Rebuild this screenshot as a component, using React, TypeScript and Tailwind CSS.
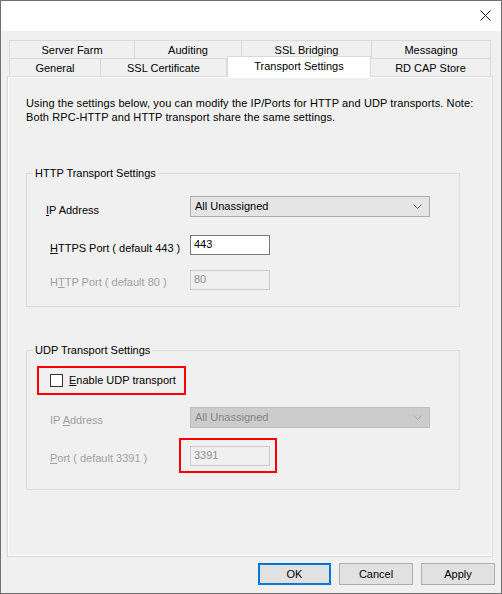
import React from "react";

const tabRow1 = [
  { label: "Server Farm", w: "w-[126px]" },
  { label: "Auditing", w: "w-[107px]" },
  { label: "SSL Bridging", w: "w-[130px]" },
  { label: "Messaging", w: "w-[119px]" },
];

const tabRow2 = [
  { label: "General", w: "w-[92px]", active: false },
  { label: "SSL Certificate", w: "w-[126px]", active: false },
  { label: "Transport Settings", w: "w-[144px]", active: true },
  { label: "RD CAP Store", w: "w-[120px]", active: false },
];

function Chevron({ color }: { color: string }) {
  return (
    <svg width="9" height="5" viewBox="0 0 9 5" className="shrink-0">
      <polyline points="0.5,0.5 4.5,4.5 8.5,0.5" fill="none" stroke={color} strokeWidth="1" />
    </svg>
  );
}

function Select({ disabled }: { disabled?: boolean }) {
  return (
    <div
      className={
        disabled
          ? "w-[240px] h-[21px] flex items-center justify-between pl-[4px] pr-[7px] border border-[#bfbfbf] bg-[#cccccc] text-[#838383]"
          : "w-[240px] h-[21px] flex items-center justify-between pl-[4px] pr-[7px] border border-[#adadad] bg-[#e5e5e5] text-black"
      }
    >
      <span className="-mt-[2px]">All Unassigned</span>
      <Chevron color={disabled ? "#a6a6a6" : "#606060"} />
    </div>
  );
}

function Field({ value, disabled }: { value: string; disabled?: boolean }) {
  return (
    <div
      className={
        disabled
          ? "w-[80px] h-[20px] pl-[3px] pt-[1px] leading-[14px] border border-[#cccccc] bg-[#f0f0f0] text-[#8d8d8d]"
          : "w-[80px] h-[20px] pl-[3px] pt-[1px] leading-[14px] border border-[#7a7a7a] bg-white text-black"
      }
    >
      {value}
    </div>
  );
}

function GroupBox({
  title,
  className,
  children,
}: {
  title: string;
  className: string;
  children: React.ReactNode;
}) {
  return (
    <fieldset className={"ml-[17px] w-[434px] border border-[#dcdcdc] " + className}>
      <legend className="ml-[6px] px-[2px] leading-[14px] text-black">{title}</legend>
      {children}
    </fieldset>
  );
}

export default function App() {
  return (
    <div className="w-[502px] h-[594px] flex flex-col border border-[#707070] bg-[#f0f0f0] text-[11px] leading-[14px] text-black font-['Liberation_Sans',Arial,sans-serif] overflow-hidden">
      {/* title bar */}
      <div className="h-[30px] bg-white flex justify-end items-start shrink-0">
        <svg width="11" height="11" viewBox="0 0 11 11" className="mt-[9px] mr-[10px]">
          <path d="M0.5 0.5 L10.5 10.5 M10.5 0.5 L0.5 10.5" stroke="#1a1a1a" strokeWidth="1" />
        </svg>
      </div>

      {/* dialog body */}
      <div className="flex-1 flex flex-col pt-[9px] pl-[6px]">
        {/* tab headers */}
        <div className="ml-[2px] flex">
          {tabRow1.map((t, i) => (
            <div
              key={t.label}
              className={
                t.w +
                " h-[18px] flex items-center justify-center border-t border-r border-[#d9d9d9] bg-[#f0f0f0]" +
                (i === 0 ? " border-l" : "")
              }
            >
              {t.label}
            </div>
          ))}
        </div>
        <div className="ml-[2px] flex items-start h-[18px]">
          {tabRow2.map((t, i) =>
            t.active ? (
              <div
                key={t.label}
                className={
                  t.w +
                  " relative z-10 -mt-[2px] h-[21px] pb-[3px] flex items-center justify-center border-t border-x border-[#d9d9d9] bg-white"
                }
              >
                {t.label}
              </div>
            ) : (
              <div
                key={t.label}
                className={
                  t.w +
                  " h-[18px] flex items-center justify-center border-t border-r border-[#d9d9d9] bg-[#f0f0f0]" +
                  (i === 0 ? " border-l" : "")
                }
              >
                {t.label}
              </div>
            )
          )}
        </div>

        {/* tab page */}
        <div className="w-[486px] h-[481px] border border-[#d9d9d9] flex">
          <div className="flex-1 border border-white flex flex-col">
            <p className="pt-[18px] pl-[17px] pr-[8px] tracking-[0.1px]">
              Using the settings below, you can modify the IP/Ports for HTTP and UDP transports. Note:
              <br />
              Both RPC-HTTP and HTTP transport share the same settings.
            </p>

            <GroupBox title="HTTP Transport Settings" className="mt-[42px]">
              <div className="pt-[16px] pb-[16px] flex flex-col">
                <div className="flex items-start">
                  <div className="w-[163px] pl-[19px] pt-[7px]">
                    <span className="underline">I</span>P Address
                  </div>
                  <Select />
                </div>
                <div className="flex items-start mt-[18px]">
                  <div className="w-[163px] pl-[23px] pt-[6px]">
                    <span className="underline">H</span>TTPS Port ( default 443 )
                  </div>
                  <Field value="443" />
                </div>
                <div className="flex items-start mt-[15px]">
                  <div className="w-[163px] pl-[23px] pt-[5px] text-[#a0a0a0]">
                    H<span className="underline">T</span>TP Port ( default 80 )
                  </div>
                  <Field value="80" disabled />
                </div>
              </div>
            </GroupBox>

            <GroupBox title="UDP Transport Settings" className="mt-[36px]">
              <div className="pt-[9px] pb-[23px] flex flex-col">
                <div className="ml-[10px] w-[149px] h-[29px] border-2 border-[#ff0000] flex items-center pl-[11px]">
                  <div className="w-[13px] h-[13px] border border-[#333333] bg-white shrink-0" />
                  <span className="ml-[6px] -mt-[1px]">
                    <span className="underline">E</span>nable UDP transport
                  </span>
                </div>
                <div className="flex items-start mt-[12px]">
                  <div className="w-[163px] pl-[23px] pt-[6px] text-[#a0a0a0]">
                    IP <span className="underline">A</span>ddress
                  </div>
                  <Select disabled />
                </div>
                <div className="flex items-start mt-[18px]">
                  <div className="w-[163px] pl-[23px] pt-[5px] text-[#a0a0a0]">
                    <span className="underline">P</span>ort ( default 3391 )
                  </div>
                  <div className="relative">
                    <Field value="3391" disabled />
                    <div className="absolute -left-[11px] -top-[8px] w-[98px] h-[35px] border-2 border-[#ff0000]" />
                  </div>
                </div>
              </div>
            </GroupBox>
          </div>
        </div>

        {/* dialog buttons */}
        <div className="mt-[6px] pr-[6px] flex justify-end gap-[8px]">
          <button className="w-[73px] h-[22px] border-2 border-[#0078d7] bg-[#e1e1e1] text-[11px]">OK</button>
          <button className="w-[74px] h-[22px] border border-[#adadad] bg-[#e1e1e1] text-[11px]">Cancel</button>
          <button className="w-[74px] h-[22px] border border-[#adadad] bg-[#e1e1e1] text-[11px]">Apply</button>
        </div>
      </div>
    </div>
  );
}
